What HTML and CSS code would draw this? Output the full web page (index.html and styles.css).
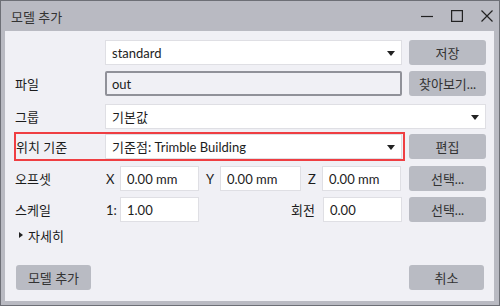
FILE: index.html
```html
<!DOCTYPE html>
<html>
<head>
    <title>모델 추가</title>
    <link rel="stylesheet" href="styles.css">
</head>
<body>
    <div class="window">
        <div class="titleBar">
            <span class="title">모델 추가</span>
            <div class="winButtons">
                <svg width="12" height="12" viewBox="0 0 12 12"><path d="M0 6.5H12" stroke="#222" stroke-width="1.2"/></svg>
                <svg width="12" height="12" viewBox="0 0 12 12"><rect x="0.6" y="0.6" width="10.8" height="10.8" fill="none" stroke="#222" stroke-width="1.2"/></svg>
                <svg width="12" height="12" viewBox="0 0 12 12"><path d="M0.5 0.5L11.5 11.5M11.5 0.5L0.5 11.5" stroke="#222" stroke-width="1.2"/></svg>
            </div>
        </div>
        <div class="panel">
            <div class="row first">
                <span class="label"></span>
                <div class="select">standard<i class="arrow"></i></div>
                <button class="btn">저장</button>
            </div>
            <div class="row file">
                <span class="label">파일</span>
                <div class="fileInput">out</div>
                <button class="btn">찾아보기...</button>
            </div>
            <div class="row group">
                <span class="label">그룹</span>
                <div class="select">기본값<i class="arrow"></i></div>
            </div>
            <div class="row place">
                <div class="redBox">
                    <span class="label">위치 기준</span>
                    <div class="select">기준점: Trimble Building<i class="arrow"></i></div>
                </div>
                <button class="btn">편집</button>
            </div>
            <div class="row">
                <span class="label">오프셋</span>
                <div class="fields">
                    <span class="axis">X</span>
                    <div class="input">0.00 mm</div>
                    <span class="axis mid">Y</span>
                    <div class="input wide">0.00 mm</div>
                    <span class="axis mid">Z</span>
                    <div class="input">0.00 mm</div>
                </div>
                <button class="btn">선택...</button>
            </div>
            <div class="row">
                <span class="label">스케일</span>
                <div class="fields">
                    <span class="axis">1:</span>
                    <div class="input">1.00</div>
                    <span class="rotate">회전</span>
                    <div class="input">0.00</div>
                </div>
                <button class="btn">선택...</button>
            </div>
            <div class="details"><i class="tri"></i>자세히</div>
            <div class="footer">
                <button class="btn">모델 추가</button>
                <button class="btn">취소</button>
            </div>
        </div>
    </div>
</body>
</html>
```
FILE: styles.css
```css
body {
    margin: 0;
    font-family: 'Lato', 'Noto Sans CJK KR', sans-serif;
    font-size: 13px;
    color: #1c1c1c;
}
.window {
    width: 500px;
    height: 306px;
    box-sizing: border-box;
    border: 1px solid #6d6f76;
    background: #b9bac2;
    display: flex;
    flex-direction: column;
}
.titleBar {
    height: 30px;
    display: flex;
    align-items: center;
    justify-content: space-between;
    padding: 0 6px 0 10px;
}
.title {
    color: #333;
}
.winButtons {
    display: flex;
    gap: 18px;
}
.winButtons svg {
    display: block;
}

.panel {
    flex: 1;
    margin: 0 5px 4px 4px;
    background: #f0f0f5;
    padding: 9px 8px 0 10px;
    display: flex;
    flex-direction: column;
}
.row {
    display: flex;
    align-items: center;
    height: 25px;
    margin-bottom: 6px;
}
.row.file { margin-bottom: 8px; }
.row.group { margin-bottom: 3px; }
.row.place { height: 29px; margin-bottom: 5px; }
.label {
    width: 90px;
    flex: none;
}
.select, .fileInput, .input {
    box-sizing: border-box;
    height: 25px;
    display: flex;
    align-items: center;
    padding-left: 6px;
    background: #fff;
    border: 1px solid #dfdfe4;
}
.select {
    flex: 1;
    position: relative;
}
.arrow {
    position: absolute;
    right: 6px;
    top: 10px;
    border-left: 4.5px solid transparent;
    border-right: 4.5px solid transparent;
    border-top: 5px solid #222;
}
.fileInput {
    flex: 1;
    background: #f0f0f5;
    border: 2px solid #909199;
    border-radius: 2px;
    padding-left: 5px;
}
.btn {
    width: 77px;
    height: 25px;
    margin-left: 7px;
    flex: none;
    border: none;
    border-radius: 3px;
    background: #b9bbc3;
    font: inherit;
    color: #333;
    padding: 0;
}
.redBox {
    flex: 1;
    display: flex;
    align-items: center;
    height: 29px;
    box-sizing: border-box;
    margin-left: -1px;
    border: 2px solid #ef3e42;
    padding-right: 1px;
}
.redBox .label { width: 89px; }
.redBox + .btn { margin-left: 4px; }

.fields {
    flex: 1;
    display: flex;
    align-items: center;
}
.axis {
    width: 15px;
    padding-left: 1px;
    box-sizing: border-box;
}
.axis.mid {
    width: 21px;
    text-align: center;
}
.input {
    width: 79px;
}
.input.wide { width: 81px; }
.rotate {
    flex: 1;
    text-align: right;
    padding-right: 8px;
}

.details {
    display: flex;
    align-items: center;
    height: 16px;
    margin-top: -1px;
}
.tri {
    margin: 0 5px 0 4px;
    border-top: 3.5px solid transparent;
    border-bottom: 3.5px solid transparent;
    border-left: 4px solid #222;
}
.footer {
    margin-top: auto;
    margin-bottom: 11px;
    display: flex;
    justify-content: space-between;
    padding-left: 1px;
    padding-right: 2px;
}
.footer .btn {
    width: 75px;
    margin: 0;
}
```
